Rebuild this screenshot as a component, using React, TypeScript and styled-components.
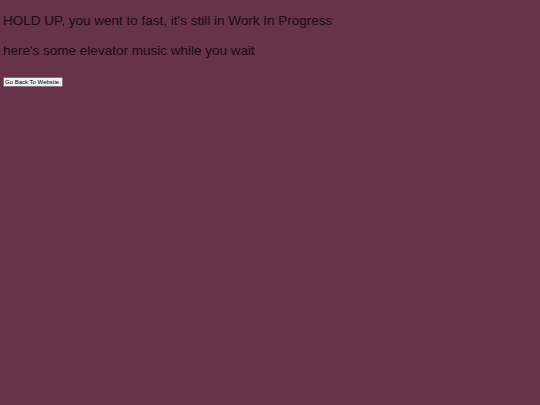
import React from "react";
import styled, { createGlobalStyle } from "styled-components";

const GlobalStyle = createGlobalStyle`
  html, body {
    margin: 0;
    padding: 0;
    background: #663348;
  }
  body {
    font-family: "Liberation Sans", Arial, sans-serif;
  }
`;

const Page = styled.div`
  display: flex;
  flex-direction: column;
  align-items: flex-start;
  gap: 14px;
  min-height: 405px;
  padding: 13px 3px;
  box-sizing: border-box;
  color: #1a0c13;
`;

const Line = styled.p`
  font-size: 13.5px;
  line-height: 16px;
  margin: 0;
`;

const BackButton = styled.button`
  font-family: "Liberation Sans", Arial, sans-serif;
  font-size: 6px;
  height: 10px;
  padding: 0 1px;
  margin-top: 4px;
  background: #efefef;
  color: #000;
  border: 1px solid #767676;
  border-radius: 1px;
  line-height: 8px;
`;

const App = () => {
  return (
    <>
      <GlobalStyle />
      <Page>
        <Line>HOLD UP, you went to fast, it's still in Work In Progress</Line>
        <Line>here's some elevator music while you wait</Line>
        <BackButton>Go Back To Website.</BackButton>
      </Page>
    </>
  );
};

export default App;
